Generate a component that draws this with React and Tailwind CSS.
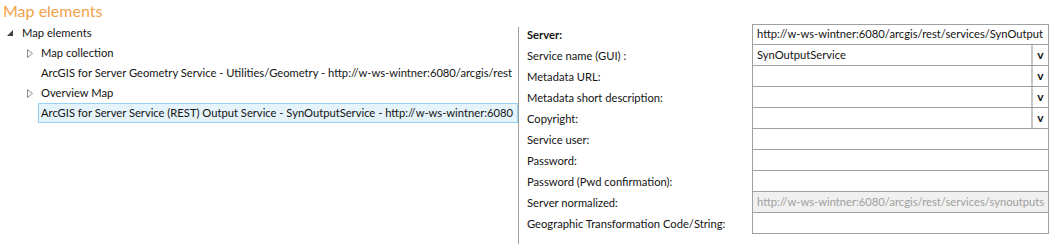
import React from 'react'

const font = { fontFamily: 'Lato, "Open Sans", sans-serif' }

const fields = [
  { label: 'Server:', bold: true, value: 'http://w-ws-wintner:6080/arcgis/rest/services/SynOutput' },
  { label: 'Service name (GUI) :', value: 'SynOutputService', drop: true },
  { label: 'Metadata URL:', value: '', drop: true },
  { label: 'Metadata short description:', value: '', drop: true },
  { label: 'Copyright:', value: '', drop: true },
  { label: 'Service user:', value: '' },
  { label: 'Password:', value: '' },
  { label: 'Password (Pwd confirmation):', value: '' },
  { label: 'Server normalized:', value: 'http://w-ws-wintner:6080/arcgis/rest/services/synoutputs', disabled: true },
  { label: 'Geographic Transformation Code/String:', value: '' },
]

function Expanded() {
  return (
    <svg width="6" height="6" viewBox="0 0 6 6" className="shrink-0">
      <path d="M6 0 L6 6 L0 6 Z" fill="#404040" />
    </svg>
  )
}

function Collapsed() {
  return (
    <svg width="6" height="9" viewBox="0 0 6 9" className="shrink-0">
      <path d="M0.5 0.5 L5.5 4.5 L0.5 8.5 Z" fill="none" stroke="#8a8a8a" strokeWidth="1" />
    </svg>
  )
}

function TreeRow({ level, icon, children, selected }) {
  return (
    <div className="h-5 flex items-center">
      <div className={level === 0 ? 'w-[22px] shrink-0 pl-[7px] flex items-center' : 'w-[41px] shrink-0 pl-[27px] flex items-center'}>
        {icon === 'open' && <Expanded />}
        {icon === 'closed' && <Collapsed />}
      </div>
      <div className={selected ? 'h-5 -ml-[3px] pl-[2px] flex items-center bg-[#e5f3fb] border border-[#99d1f5] flex-1 min-w-0' : 'whitespace-nowrap'}>
        <span className="whitespace-nowrap">{children}</span>
      </div>
    </div>
  )
}

export default function App() {
  return (
    <div className="w-[1053px] h-[244px] bg-white text-[11.2px] text-[#141414] overflow-hidden" style={font}>
      <div className="h-[24px] pl-[3px] text-[16px] leading-[22px] text-[#f2a24a]">Map elements</div>
      <div className="flex">
        <div className="w-[518px] shrink-0 -mt-[1px]">
          <TreeRow level={0} icon="open">Map elements</TreeRow>
          <TreeRow level={1} icon="closed">Map collection</TreeRow>
          <TreeRow level={1}>ArcGIS for Server Geometry Service - Utilities/Geometry - http://w-ws-wintner:6080/arcgis/rest</TreeRow>
          <TreeRow level={1} icon="closed">Overview Map</TreeRow>
          <TreeRow level={1} selected>ArcGIS for Server Service (REST) Output Service - SynOutputService - http://w-ws-wintner:6080</TreeRow>
        </div>
        <div className="w-px shrink-0 bg-[#a0a0a0] mt-[3px] h-[221px]" />
        <div className="flex-1 pl-2">
          {fields.map((f, i) => (
            <div key={i} className="flex h-[21px]">
              <div className={'w-[225px] shrink-0 flex items-center pt-[2px] whitespace-nowrap ' + (f.bold ? 'font-bold' : '')}>{f.label}</div>
              <div
                className={
                  'w-[297px] shrink-0 flex border-x border-[#a0a0a0] ' +
                  (i === 0 ? 'border-t ' : '') +
                  'border-b ' +
                  (f.disabled ? 'bg-[#f0f0f0] text-[#a0a0a0]' : 'bg-white')
                }
              >
                <div className="flex-1 min-w-0 px-[4px] flex items-center whitespace-nowrap overflow-hidden">{f.value}</div>
                {f.drop && (
                  <div className="w-[17px] shrink-0 border-l-2 border-[#c8c8c8] flex items-center justify-center font-bold text-[12px]">v</div>
                )}
              </div>
            </div>
          ))}
        </div>
      </div>
    </div>
  )
}
